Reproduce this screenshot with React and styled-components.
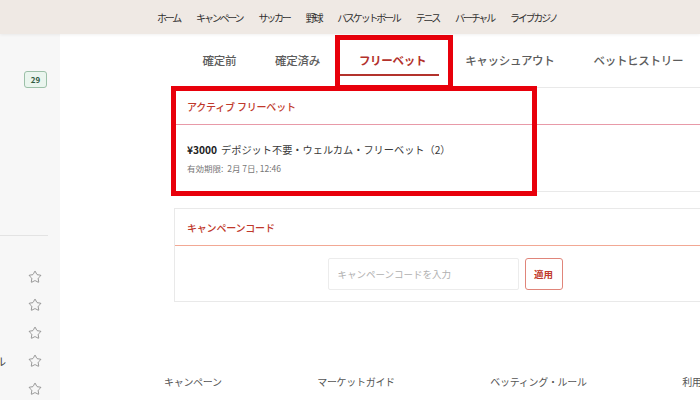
import React from 'react'
import styled, { createGlobalStyle } from 'styled-components'
import { Star } from 'lucide-react'

const GlobalStyle = createGlobalStyle`
  html, body {
    margin: 0;
    padding: 0;
    width: 700px;
    height: 400px;
    overflow: hidden;
    background: #ffffff;
    font-family: "Noto Sans CJK JP", "Noto Sans", sans-serif;
  }
`

const Page = styled.div`
  position: relative;
  width: 700px;
  height: 400px;
  overflow: hidden;
  display: flex;
  flex-direction: column;
`

const TopBar = styled.nav`
  height: 34px;
  flex: none;
  background: #efe9e4;
  box-shadow: 0 1px 3px rgba(0, 0, 0, 0.06);
  display: flex;
  align-items: center;
  padding-left: 157px;
  gap: 16px;
  position: relative;
  z-index: 1;
`

const NavItem = styled.span`
  font-size: 10px;
  letter-spacing: -2.2px;
  color: #2f2f2f;
  white-space: nowrap;
`

const Body = styled.div`
  flex: 1;
  display: flex;
`

const Sidebar = styled.aside`
  width: 60px;
  flex: none;
  background: #f7f7f7;
  display: flex;
  flex-direction: column;
  padding-top: 37px;
`

const BadgeRow = styled.div`
  display: flex;
  justify-content: flex-end;
  padding-right: 13px;
`

const Badge = styled.span`
  width: 21px;
  height: 15px;
  border: 1px solid #9cc0a8;
  border-radius: 3px;
  background: #eaf5ee;
  color: #2e5a3e;
  font-size: 8px;
  font-weight: 700;
  display: flex;
  align-items: center;
  justify-content: center;
`

const SideDivider = styled.div`
  width: 48px;
  height: 1px;
  background: #e3e3e3;
  margin-top: 147px;
`

const StarList = styled.div`
  margin-top: 27px;
  display: flex;
  flex-direction: column;
`

const StarRow = styled.div`
  height: 28px;
  display: flex;
  align-items: center;
  justify-content: space-between;
  padding-right: 18px;
  color: #555;
`

const StarLabel = styled.span`
  margin-left: -5px;
  font-size: 11px;
  color: #444;
`

const Main = styled.main`
  flex: 1;
  display: flex;
  flex-direction: column;
  padding-left: 114px;
`

const Column = styled.div`
  width: 541px;
  display: flex;
  flex-direction: column;
`

const Tabs = styled.div`
  height: 53px;
  display: flex;
  padding-left: 9px;
`

const Tab = styled.div`
  padding: 19px 19.5px 0;
  display: flex;
  flex-direction: column;
  font-size: 11.5px;
  letter-spacing: -0.3px;
  line-height: 14px;
  white-space: nowrap;
  font-weight: ${p => (p.$active ? 700 : 500)};
  color: ${p => (p.$active ? '#b3322c' : '#5c5c5c')};
`

const Underline = styled.div`
  height: 1.5px;
  background: #b3322c;
  margin: 7px -13px 0 -19px;
`

const Card = styled.section`
  border: 1px solid #e9e9e9;
  border-right: none;
  background: #fff;
  margin-top: ${p => p.$gap || 0}px;
`

const CardHeader = styled.header`
  height: 36px;
  display: flex;
  align-items: center;
  padding-left: 12px;
  font-size: 10px;
  letter-spacing: -0.2px;
  font-weight: 500;
  color: #c0392b;
  border-bottom: 1px solid ${p => p.$line};
`

const FreebetBody = styled.div`
  padding: 18px 12px 17px;
  display: flex;
  flex-direction: column;
  gap: 5px;
`

const FreebetTitle = styled.div`
  font-size: 10.2px;
  line-height: 14px;
  color: #3a3a3a;

  b {
    font-weight: 700;
    color: #222;
    margin-right: 4px;
  }
`

const Expiry = styled.div`
  font-size: 8.5px;
  line-height: 12px;
  color: #777;
`

const CodeBody = styled.div`
  padding: 12px 0 11px;
  display: flex;
  justify-content: center;
  gap: 6px;
`

const CodeInput = styled.input`
  width: 191px;
  height: 32px;
  box-sizing: border-box;
  border: 1px solid #ececec;
  border-radius: 2px;
  padding: 0 9px;
  font-family: inherit;
  font-size: 9.5px;
  outline: none;

  &::placeholder {
    color: #b0b0b0;
  }
`

const ApplyButton = styled.button`
  width: 38px;
  height: 32px;
  border: 1px solid #e0857a;
  border-radius: 3px;
  background: #fff;
  color: #c0392b;
  font-family: inherit;
  font-size: 9.5px;
  font-weight: 700;
  padding: 0;
`

const Footer = styled.footer`
  margin-top: 73px;
  margin-left: -10px;
  display: flex;
  gap: 95.5px;
  white-space: nowrap;
`

const FooterLink = styled.span`
  font-size: 10px;
  line-height: 14px;
  letter-spacing: -0.3px;
  color: #555;
`

const Highlight = styled.div`
  position: absolute;
  border: 5px solid #e8000b;
  box-sizing: border-box;
  pointer-events: none;
`

const navItems = ['ホーム', 'キャンペーン', 'サッカー', '野球', 'バスケットボール', 'テニス', 'バーチャル', 'ライブカジノ']
const tabs = ['確定前', '確定済み', 'フリーベット', 'キャッシュアウト', 'ベットヒストリー']
const starLabels = ['', '', '', 'ル', '']
const footerLinks = ['キャンペーン', 'マーケットガイド', 'ベッティング・ルール', '利用規約']

const App = () => (
  <Page>
    <GlobalStyle />
    <TopBar>
      {navItems.map(item => (
        <NavItem key={item}>{item}</NavItem>
      ))}
    </TopBar>
    <Body>
      <Sidebar>
        <BadgeRow>
          <Badge>29</Badge>
        </BadgeRow>
        <SideDivider />
        <StarList>
          {starLabels.map((label, i) => (
            <StarRow key={i}>
              <StarLabel>{label}</StarLabel>
              <Star size={14} strokeWidth={1} />
            </StarRow>
          ))}
        </StarList>
      </Sidebar>
      <Main>
        <Column>
          <Tabs>
            {tabs.map(t => (
              <Tab key={t} $active={t === 'フリーベット'}>
                {t}
                {t === 'フリーベット' && <Underline />}
              </Tab>
            ))}
          </Tabs>
          <Card>
            <CardHeader $line="#e89aa8">アクティブ フリーベット</CardHeader>
            <FreebetBody>
              <FreebetTitle>
                <b>¥3000</b>デポジット不要・ウェルカム・フリーベット（2）
              </FreebetTitle>
              <Expiry>有効期限:&nbsp; 2月 7日, 12:46</Expiry>
            </FreebetBody>
          </Card>
          <Card $gap={16}>
            <CardHeader $line="#f2a894">キャンペーンコード</CardHeader>
            <CodeBody>
              <CodeInput placeholder="キャンペーンコードを入力" />
              <ApplyButton>適用</ApplyButton>
            </CodeBody>
          </Card>
          <Footer>
            {footerLinks.map(l => (
              <FooterLink key={l}>{l}</FooterLink>
            ))}
          </Footer>
        </Column>
      </Main>
    </Body>
    <Highlight style={{ left: 335, top: 35, width: 118, height: 55 }} />
    <Highlight style={{ left: 171, top: 86, width: 366, height: 110 }} />
  </Page>
)

export default App
